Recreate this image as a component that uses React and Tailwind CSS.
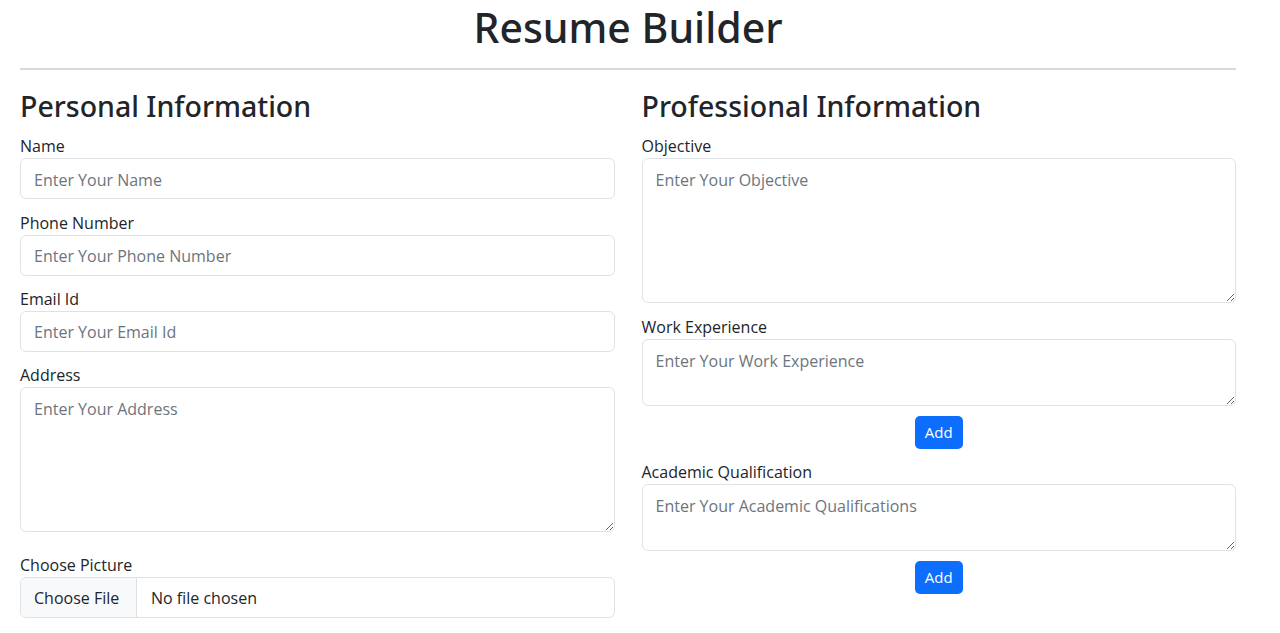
import React from 'react';

const font = { fontFamily: '"Open Sans", "Noto Sans", Arial, sans-serif' };
const headFont = { fontFamily: '"Noto Sans", "Open Sans", Arial, sans-serif' };

const Label = ({ children, className = '' }) => (
    <label className={`block h-[24px] leading-[24px] text-[16px] text-[#212529] ${className}`}>{children}</label>
);

const TextInput = ({ placeholder }) => (
    <input
        type="text"
        placeholder={placeholder}
        className="block w-full h-[41px] px-[13px] pt-[2px] text-[16px] text-[#212529] bg-white border border-[#dee2e6] rounded-[6px] outline-none placeholder:text-[#6c757d]"
    />
);

const TextArea = ({ placeholder, height }) => (
    <textarea
        placeholder={placeholder}
        className={`block w-full ${height} px-[13px] pt-[8px] pb-[6px] leading-[26px] text-[16px] text-[#212529] bg-white border border-[#dee2e6] rounded-[6px] outline-none placeholder:text-[#6c757d]`}
    />
);

const AddButton = () => (
    <div className="flex justify-center">
        <button className="w-[48px] h-[33px] bg-[#0d6efd] text-white text-[15px] rounded-[5px] leading-none">Add</button>
    </div>
);

const App = () => {
    return (
        <div className="min-h-screen bg-white text-[#212529]" style={font}>
            <div className="ml-[20px] w-[1216px] pt-[1px]">
                <h1 className="text-center text-[41px] leading-[52px] font-medium" style={headFont}>Resume Builder</h1>
                <hr className="mt-[15px] border-0 border-t-2 border-[#d9dadb]" />

                <div className="grid grid-cols-2 gap-x-[27px] mt-[18px]">
                    {/* Personal */}
                    <div>
                        <h2 className="text-[28.5px] leading-[36px] font-medium mb-[10px]" style={headFont}>Personal Information</h2>

                        <div className="mb-[11.5px]">
                            <Label>Name</Label>
                            <TextInput placeholder="Enter Your Name" />
                        </div>
                        <div className="mb-[11.2px]">
                            <Label>Phone Number</Label>
                            <TextInput placeholder="Enter Your Phone Number" />
                        </div>
                        <div className="mb-[11.2px]">
                            <Label>Email Id</Label>
                            <TextInput placeholder="Enter Your Email Id" />
                        </div>
                        <div className="mb-[21px]">
                            <Label>Address</Label>
                            <TextArea placeholder="Enter Your Address" height="h-[145px]" />
                        </div>
                        <div>
                            <Label>Choose Picture</Label>
                            <div className="flex items-stretch h-[41px] border border-[#dee2e6] rounded-[6px] overflow-hidden text-[16px]">
                                <span className="flex items-center w-[116px] pl-[13px] pt-[2px] bg-[#f8f9fa] border-r border-[#dee2e6] text-[#212529]">Choose File</span>
                                <span className="flex items-center pl-[14px] pt-[2px] text-[#212529]">No file chosen</span>
                            </div>
                        </div>
                    </div>

                    {/* Professional */}
                    <div>
                        <h2 className="text-[28.5px] leading-[36px] font-medium mb-[10px]" style={headFont}>Professional Information</h2>

                        <div className="mb-[12px]">
                            <Label>Objective</Label>
                            <TextArea placeholder="Enter Your Objective" height="h-[145px]" />
                        </div>
                        <div>
                            <Label>Work Experience</Label>
                            <TextArea placeholder="Enter Your Work Experience" height="h-[67px]" />
                        </div>
                        <div className="mt-[10px] mb-[11px]">
                            <AddButton />
                        </div>
                        <div>
                            <Label>Academic Qualification</Label>
                            <TextArea placeholder="Enter Your Academic Qualifications" height="h-[67px]" />
                        </div>
                        <div className="mt-[10px]">
                            <AddButton />
                        </div>
                    </div>
                </div>
            </div>
        </div>
    );
};

export default App;
